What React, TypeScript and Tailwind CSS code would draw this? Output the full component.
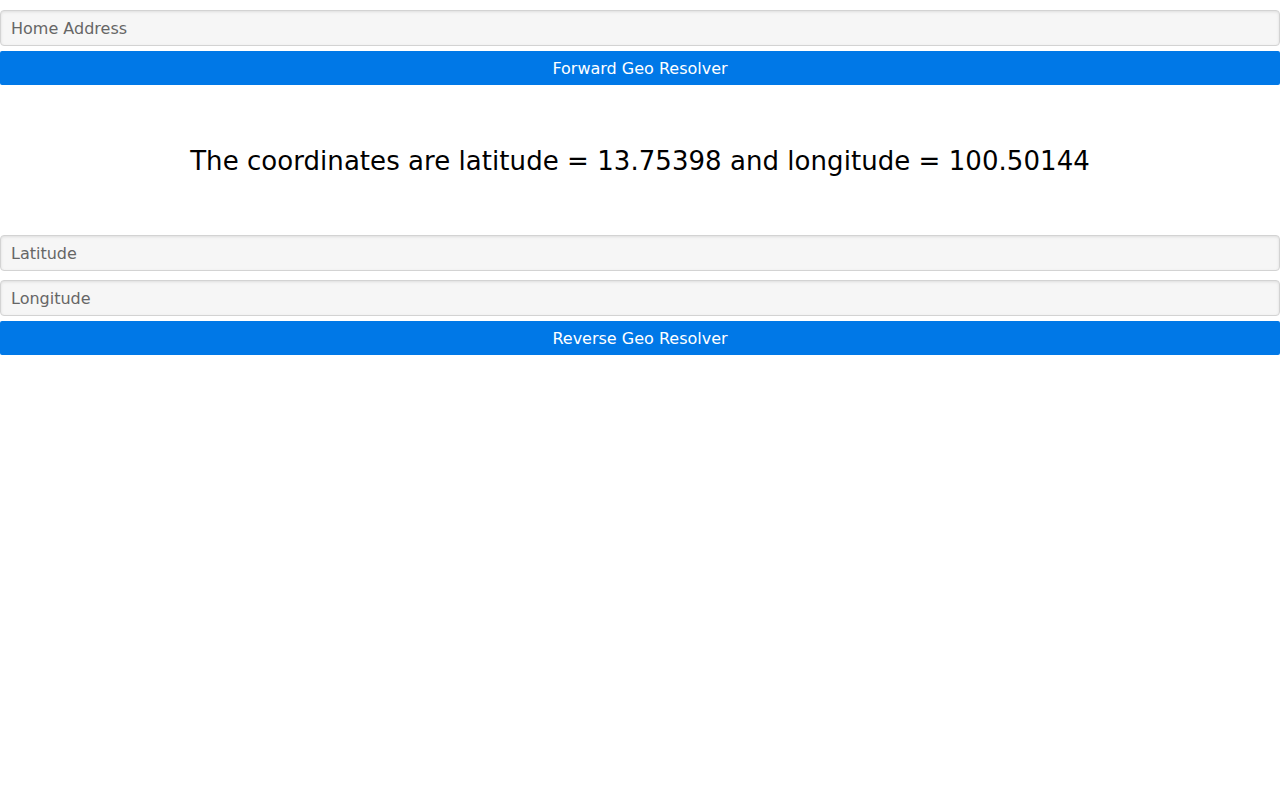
export default function App() {
  const inputCls =
    "block w-full h-[36px] px-[10px] rounded-[4px] border border-[#d3d3d3] bg-[#f6f6f6] shadow-[inset_0_1px_3px_#ddd] text-[16px] text-[#333] placeholder:text-[#666] outline-none";
  const btnCls =
    "block w-full h-[34px] pt-[2px] rounded-[2px] bg-[#0078e7] text-white text-[16px] text-center";
  return (
    <div className="min-h-[800px] bg-white" style={{ fontFamily: '"DejaVu Sans", sans-serif' }}>
      <div className="pt-[10px]">
        <input className={inputCls} placeholder="Home Address" />
        <button className={`${btnCls} mt-[5px]`}>Forward Geo Resolver</button>
      </div>
      <div className="h-[150px] pt-[3px] flex items-center justify-center">
        <p className="text-[26px] tracking-[0.05px] text-black">
          The coordinates are latitude = 13.75398 and longitude = 100.50144
        </p>
      </div>
      <div>
        <input className={inputCls} placeholder="Latitude" />
        <input className={`${inputCls} mt-[9px]`} placeholder="Longitude" />
        <button className={`${btnCls} mt-[5px]`}>Reverse Geo Resolver</button>
      </div>
    </div>
  );
}
